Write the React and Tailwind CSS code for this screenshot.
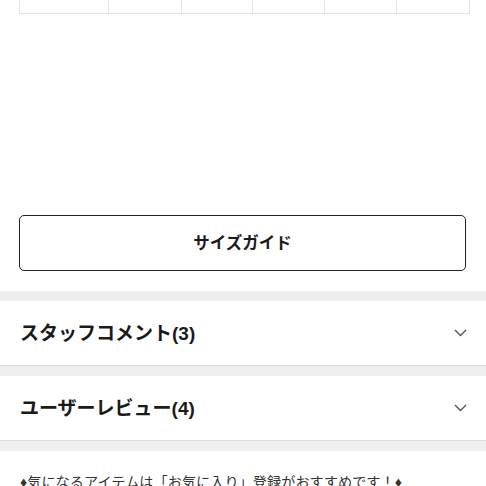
const font = { fontFamily: '"Liberation Sans", "Noto Sans CJK JP", sans-serif' }

function Chevron() {
  return (
    <svg width="13" height="8" viewBox="0 0 13 8" fill="none" className="shrink-0">
      <path d="M1 1L6.5 6.5L12 1" stroke="#555" strokeWidth="1.4" />
    </svg>
  )
}

function Section({ title }) {
  return (
    <>
      <div className="flex h-[65px] items-center justify-between border-b border-[#dcdcdc] bg-white pl-5 pr-[19px]">
        <h2 className="text-[19px] font-bold leading-none text-[#1a1a1a]">{title}</h2>
        <Chevron />
      </div>
      <div className="h-[10px] bg-[#efefef]" />
    </>
  )
}

export default function App() {
  const cols = ['w-[89px]', 'w-[73px]', 'w-[72px]', 'w-[72px]', 'w-[72px]', 'w-[73px]']

  return (
    <div className="h-[486px] w-[486px] overflow-hidden bg-white" style={font}>
      <div className="px-[19px]">
        <div className="flex h-[14px] w-[451px] border-b border-l border-[#e2e2e2]">
          {cols.map((w, i) => (
            <div key={i} className={`${w} h-full border-r border-[#e2e2e2]`} />
          ))}
        </div>
      </div>

      <div className="mt-[201px] pr-[20px] pl-[19px]">
        <button className="flex h-[56px] w-full items-center justify-center rounded-[5px] border border-[#222] bg-white text-[16.5px] font-bold text-[#1a1a1a]">
          サイズガイド
        </button>
      </div>

      <div className="mt-[20px] h-[10px] bg-[#efefef]" />

      <Section title="スタッフコメント(3)" />
      <Section title="ユーザーレビュー(4)" />

      <p className="px-5 pt-[21px] text-[14.2px] leading-5 text-[#333]">
        ♦気になるアイテムは「お気に入り」登録がおすすめです！♦
      </p>
    </div>
  )
}
